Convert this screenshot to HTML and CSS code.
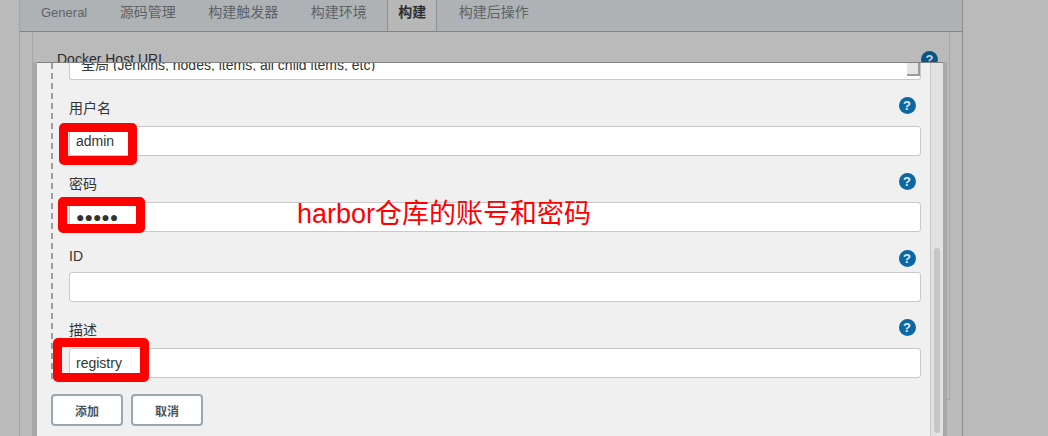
FILE: index.html
```html
<!DOCTYPE html>
<html lang="zh">
<head>
<meta charset="utf-8">
<title>Docker Host credentials</title>
<link rel="stylesheet" href="styles.css">
</head>
<body>
<div class="panel">
  <nav class="tabs">
    <span class="tab tab-latin">General</span>
    <span class="tab">源码管理</span>
    <span class="tab">构建触发器</span>
    <span class="tab">构建环境</span>
    <span class="tab tab-active">构建</span>
    <span class="tab">构建后操作</span>
  </nav>
  <div class="panel-body">
    <div class="inner">
      <div class="docker-row">
        <span class="docker-label">Docker Host URL</span>
        <span class="help help-dim">?</span>
      </div>
      <div class="behind-button"></div>
    </div>
  </div>
</div>

<div class="modal">
  <div class="modal-main">
    <div class="dashed"></div>
    <div class="scope-box">
      <span class="scope-clip"><span class="scope-text">全局 (Jenkins, nodes, items, all child items, etc)</span></span>
      <span class="resizer"></span>
    </div>
    <div class="field">
      <div class="label-row"><span>用户名</span><span class="help">?</span></div>
      <div class="input">admin</div>
    </div>
    <div class="field">
      <div class="label-row"><span>密码</span><span class="help">?</span></div>
      <div class="input input-dots">●●●●●</div>
    </div>
    <div class="field field-latin">
      <div class="label-row"><span>ID</span><span class="help">?</span></div>
      <div class="input"></div>
    </div>
    <div class="field">
      <div class="label-row"><span>描述</span><span class="help">?</span></div>
      <div class="input">registry</div>
    </div>
    <div class="actions">
      <button class="btn" type="button">添加</button>
      <button class="btn" type="button">取消</button>
    </div>
  </div>
  <div class="scrollbar"><div class="thumb"></div></div>
</div>

<div class="mark mark-user"></div>
<div class="mark mark-pass"></div>
<div class="mark mark-desc"></div>
<div class="note">harbor仓库的账号和密码</div>
</body>
</html>
```

FILE: styles.css
```css
* { box-sizing: border-box; }
html, body { height: 100%; }
body {
  margin: 0;
  height: 436px;
  overflow: hidden;
  background: #bababa;
  font-family: "Liberation Sans", "Noto Sans CJK SC", sans-serif;
  color: #333;
  font-size: 14px;
}
.panel {
  width: 944px;
  height: 436px;
  margin-left: 19px;
  border-left: 1px solid #a4a4a4;
  border-right: 1px solid #8f8f8f;
  display: flex;
  flex-direction: column;
}
.tabs {
  height: 32px;
  flex: none;
  background: #aeb2b5;
  border-bottom: 1px solid #7f8486;
  display: flex;
  gap: 32.5px;
  padding-left: 21px;
  font-size: 14px;
  color: #5e6264;
}
.tab {
  padding-top: 3px;
  line-height: 18px;
  height: 31px;
}
.tab-latin { font-size: 13px; padding-top: 4px; }
.tab-active {
  width: 50px;
  background: #b8b8b8;
  color: #2f2f2f;
  font-weight: bold;
  text-align: center;
  border-left: 1px solid #8d9092;
  border-right: 1px solid #8d9092;
  margin: 0 -11px 0 -12px;
}
.panel-body {
  flex: 1;
  padding: 0 12px;
  display: flex;
}
.inner {
  flex: 1;
  height: 368px;
  border-left: 1px solid #a6a6a6;
  border-right: 1px solid #a6a6a6;
  border-bottom: 1px solid #a6a6a6;
  padding: 18px 11px 0 24px;
  position: relative;
}
.docker-row {
  display: flex;
  justify-content: space-between;
  align-items: center;
  line-height: 18px;
  color: #2b2b2b;
}
.behind-button {
  position: absolute;
  left: 1px;
  top: 369px;
  width: 30px;
  height: 31px;
  border: 2px solid #7f8a92;
  border-radius: 4px;
}
.help {
  width: 17px;
  height: 17px;
  border-radius: 50%;
  background: #0b68a4;
  color: #e6eef4;
  font-size: 13px;
  font-weight: bold;
  line-height: 17px;
  text-align: center;
  flex: none;
}
.help-dim { background: #085587; color: #c9d3da; }

.modal {
  position: absolute;
  left: 37px;
  top: 62px;
  width: 906px;
  height: 374px;
  border-top: 1px solid #808080;
  display: flex;
  box-shadow: -5px 0 0 #a8a8a8, 4px 0 0 #a8a8a8;
}
.modal-main {
  position: relative;
  flex: 1;
  background: #f0f0f0;
  border-right: 1px solid #c6c6c6;
  padding: 0 9px 0 32px;
  overflow: hidden;
}
.scrollbar {
  width: 12px;
  flex: none;
  background: #e2e2e0;
  padding: 185px 3px 3px;
}
.thumb {
  height: 100%;
  width: 6px;
  background: #c5c7c6;
  border-radius: 3px;
}
.dashed {
  position: absolute;
  left: 14px;
  top: 0;
  height: 316px;
  width: 0;
  border-left: 2px dashed #9d9d9d;
}
.scope-box {
  height: 17px;
  background: #fff;
  border: 1px solid #c9c9c9;
  border-top: 0;
  border-radius: 0 0 3px 3px;
  position: relative;
  overflow: hidden;
  padding-left: 11px;
}
.scope-clip {
  display: block;
  height: 8px;
  overflow: hidden;
}
.scope-text {
  display: block;
  margin-top: -7px;
  line-height: 18px;
  font-size: 14px;
  color: #333;
}
.resizer {
  position: absolute;
  right: 0;
  top: 0;
  width: 13px;
  height: 13px;
  background: #e4e4e4;
  border-right: 2px solid #9b9b9b;
  border-bottom: 2px solid #9b9b9b;
}
.field { margin-top: 16px; }
.field-latin { margin-top: 10px; }
.label-row {
  height: 30px;
  display: flex;
  justify-content: space-between;
  align-items: flex-start;
  line-height: 24px;
  padding-right: 5.5px;
}
.label-row .help { margin-top: 1px; }
.field-latin .label-row { padding-top: 2px; }
.field-latin .label-row .help { margin-top: 6px; }
.input {
  height: 30px;
  background: #fff;
  border: 1px solid #c9c9c9;
  border-radius: 3px;
  padding: 0 6px;
  line-height: 28px;
  font-size: 14px;
  color: #333;
}
.input-dots { font-size: 14px; }
.actions {
  display: flex;
  gap: 8px;
  margin: 16px 0 0 -18px;
}
.btn {
  width: 72px;
  height: 32px;
  background: #fff;
  border: 2px solid #9aa7b1;
  border-radius: 4px;
  font-family: inherit;
  font-size: 12px;
  font-weight: bold;
  color: #4a5560;
  padding: 0;
}
.mark {
  position: absolute;
  border: 9px solid #ff0000;
  border-radius: 5px;
}
.mark-user { left: 59px; top: 123px; width: 78px; height: 42px; }
.mark-pass { left: 58px; top: 197px; width: 87px; height: 36px; }
.mark-desc { left: 53px; top: 338px; width: 96px; height: 44px; }
.note {
  position: absolute;
  left: 297px;
  top: 196px;
  font-size: 27px;
  line-height: 36px;
  color: #ff0000;
  white-space: nowrap;
  font-family: "Liberation Sans", "Noto Sans CJK SC", sans-serif;
}
```
